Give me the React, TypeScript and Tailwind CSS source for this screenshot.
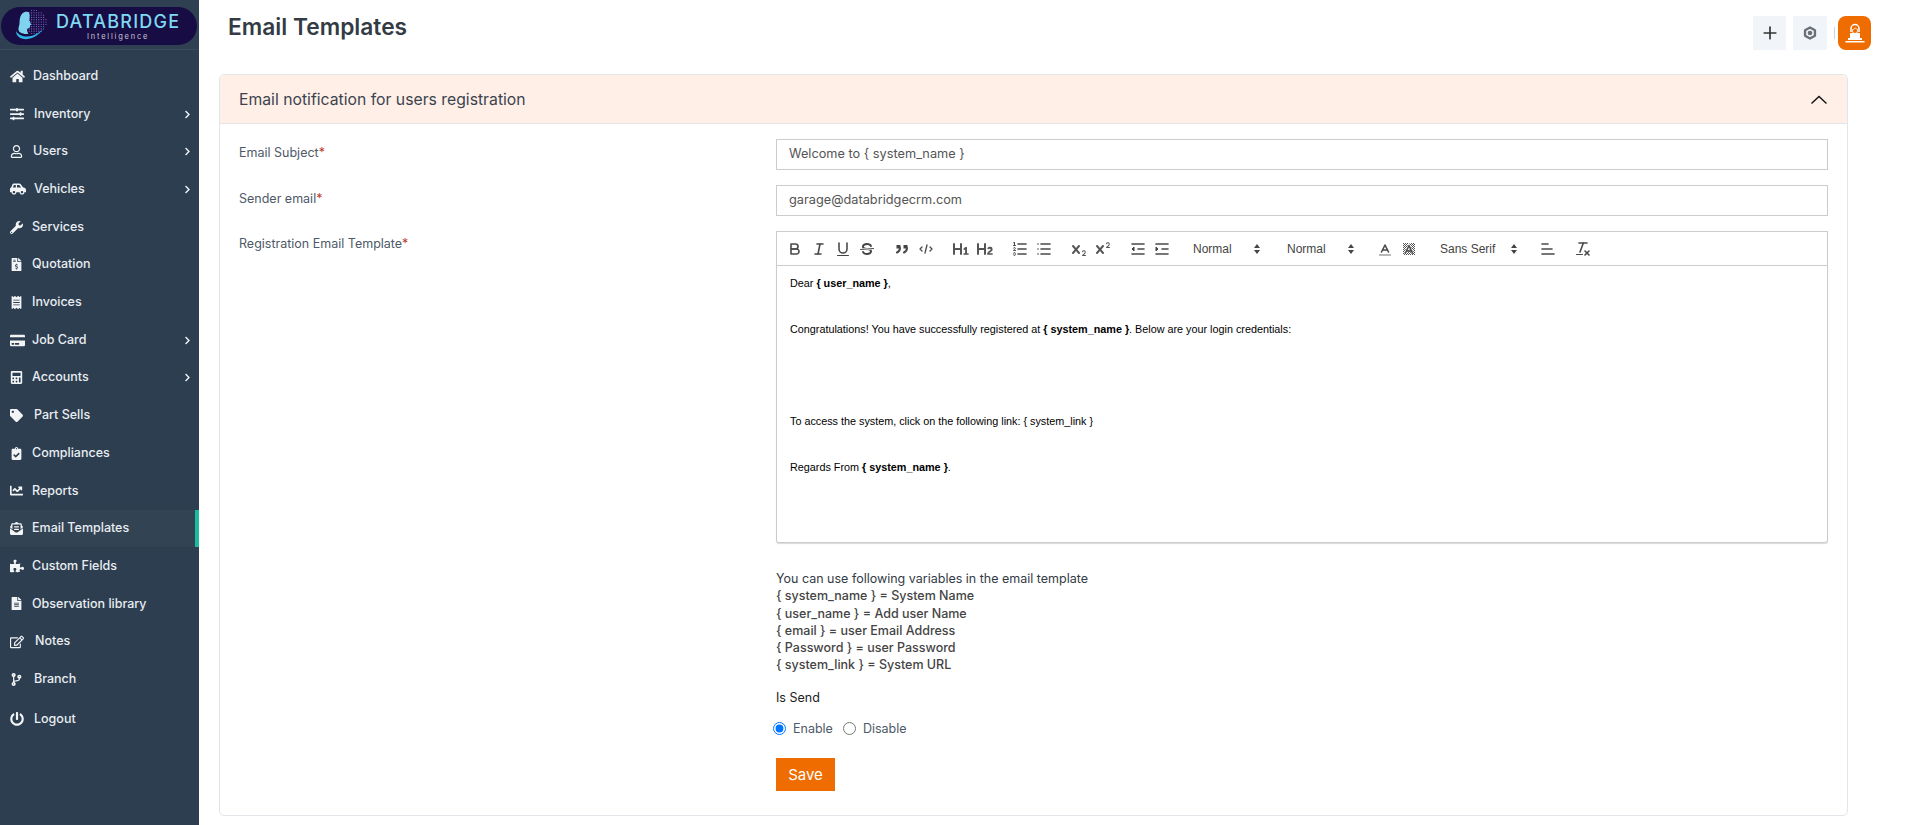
import React from 'react';
import {
  FaHome, FaSlidersH, FaRegUser, FaCarSide, FaWrench, FaFileInvoiceDollar, FaReceipt, FaCreditCard,
  FaCalculator, FaTag, FaClipboardCheck, FaChartLine, FaEnvelopeOpenText, FaPuzzlePiece, FaFileAlt,
  FaRegEdit, FaCodeBranch, FaPowerOff, FaChevronRight,
} from 'react-icons/fa';
import { Plus } from 'lucide-react';

const UI = "font-['Inter','Noto_Sans',sans-serif]";

const navItems = [
  { label: 'Dashboard', icon: FaHome, size: 15, pad: 'pl-[1px]' },
  { label: 'Inventory', icon: FaSlidersH, size: 14, pad: 'pl-[2px]', arrow: true },
  { label: 'Users', icon: FaRegUser, size: 13, pad: 'pl-[1px]', arrow: true },
  { label: 'Vehicles', icon: FaCarSide, size: 16, pad: 'pl-[2px]', arrow: true },
  { label: 'Services', icon: FaWrench, size: 13, pad: 'pl-0' },
  { label: 'Quotation', icon: FaFileInvoiceDollar, size: 13, pad: 'pl-0' },
  { label: 'Invoices', icon: FaReceipt, size: 13, pad: 'pl-0' },
  { label: 'Job Card', icon: FaCreditCard, size: 15, pad: 'pl-0', arrow: true },
  { label: 'Accounts', icon: FaCalculator, size: 13, pad: 'pl-0', arrow: true },
  { label: 'Part Sells', icon: FaTag, size: 13, pad: 'pl-[2px]' },
  { label: 'Compliances', icon: FaClipboardCheck, size: 13, pad: 'pl-0' },
  { label: 'Reports', icon: FaChartLine, size: 13, pad: 'pl-0' },
  { label: 'Email Templates', icon: FaEnvelopeOpenText, size: 13, pad: 'pl-0', active: true },
  { label: 'Custom Fields', icon: FaPuzzlePiece, size: 14, pad: 'pl-0' },
  { label: 'Observation library', icon: FaFileAlt, size: 13, pad: 'pl-0' },
  { label: 'Notes', icon: FaRegEdit, size: 14, pad: 'pl-[3px]' },
  { label: 'Branch', icon: FaCodeBranch, size: 13, pad: 'pl-[2px]' },
  { label: 'Logout', icon: FaPowerOff, size: 14, pad: 'pl-[2px]', logout: true },
];

function Logo() {
  const dots = [];
  for (let r = 0; r < 11; r++) {
    for (let c = 0; c < 11; c++) {
      const dx = c - 5;
      const dy = r - 5;
      if (dx * dx + dy * dy > 27) continue;
      dots.push(
        <circle key={`${r}-${c}`} cx={33 + dx * 2.4} cy={15 + dy * 2.3} r="0.6" fill={(r * 2 + c) % 3 === 0 ? '#c9509f' : '#5a78d8'} />
      );
    }
  }
  return (
    <div className="flex h-[38px] w-[196px] items-center rounded-[19px] bg-[#170c43] overflow-hidden">
      <svg width="54" height="38" viewBox="0 0 54 38" className="shrink-0">
        {dots}
        <path d="M27 5c-4-1-7 2-8 6-.8 3 0 5-1 8-.7 2.500-1 5 1.500 6.500 3 1.500 6 2 8 1-1.500-1.500-2-3.500-1-5 1-.5 2.500-.5 2.500-2 0-1 .5-1.500 1-2 .5-.5-.5-1.200-.8-1.500.5-.8 0-1.500-1-2.500 .8-3.500 .5-7.500-.7-8.500z" fill="#7fd3ef" />
        <path d="M15 24c0 7 8 10 16 7 5-2 9-6 11-9-4 4-10 7.500-16 7.500-4.500 0-8.500-1.500-11-5.500z" fill="#2fb3e8" />
      </svg>
      <div className="flex flex-col items-center ml-[1px]">
        <span className={`${UI} text-[18px] leading-[20px] font-medium tracking-[1.2px] text-[#7fd9f2]`}>DATABRIDGE</span>
        <span className={`${UI} text-[7.5px] leading-[9px] tracking-[1.8px] text-[#c9c9d6]`}>Intelligence</span>
      </div>
    </div>
  );
}

function Sidebar() {
  return (
    <aside className="w-[199px] shrink-0 bg-[#2c3e50] flex flex-col">
      <div className="h-[50px] pl-[1px] pt-[7px] border-b border-[#394b5d] bg-[#2e4052]">
        <Logo />
      </div>
      <nav className="pt-[7.500px]">
        {navItems.map((item) => {
          const Icon = item.icon;
          return (
            <div
              key={item.label}
              className={`h-[37.7px] flex items-center pl-[10px] pr-[7px] ${item.active ? 'bg-[#324354] border-r-4 border-[#1abc9c]' : ''} ${item.logout ? 'mt-[2px]' : ''}`}
            >
              <span className="w-[22px] shrink-0 flex">
                <Icon size={item.size} color="#f2f4f6" />
              </span>
              <span className={`${item.pad} flex-1 text-[12.5px] font-medium text-[#e9edf1]`}>{item.label}</span>
              {item.arrow && <FaChevronRight size={9} color="#f2f4f6" />}
            </div>
          );
        })}
      </nav>
    </aside>
  );
}

const stroke = { fill: 'none', stroke: '#4a4a4a', strokeWidth: 1.6, strokeLinecap: 'round', strokeLinejoin: 'round' } as const;
const thin = { ...stroke, strokeWidth: 1 };

function Tool({ children }: { children: React.ReactNode }) {
  return (
    <span className="w-[24px] h-[24px] flex items-center justify-center shrink-0">
      <svg width="18" height="18" viewBox="0 0 18 18">{children}</svg>
    </span>
  );
}

function Picker({ label, width }: { label: string; width: string }) {
  return (
    <span className={`${width} h-[24px] flex items-center justify-between pl-[8px] pr-[7px] shrink-0 text-[12px] text-[#444] font-['Liberation_Sans',Arial,sans-serif]`}>
      {label}
      <svg width="8" height="12" viewBox="0 0 8 12">
        <path d="M4 1 7 5H1z M4 11 1 7h6z" fill="#444" />
      </svg>
    </span>
  );
}

function Toolbar() {
  return (
    <div className="h-[35px] border border-[#ccc] flex items-center pl-[6px]">
      <div className="flex mr-[11px]">
        <Tool>
          <path {...stroke} d="M5,4H9.5A2.5,2.5,0,0,1,12,6.5v0A2.5,2.5,0,0,1,9.5,9H5V4Z" />
          <path {...stroke} d="M5,9h5.5A2.5,2.5,0,0,1,13,11.5v0A2.5,2.5,0,0,1,10.5,14H5V9Z" />
        </Tool>
        <Tool>
          <line {...stroke} x1="7" x2="13" y1="4" y2="4" />
          <line {...stroke} x1="5" x2="11" y1="14" y2="14" />
          <line {...stroke} x1="8" x2="10" y1="14" y2="4" />
        </Tool>
        <Tool>
          <path {...stroke} d="M5,3V9a4.006,4.006,0,0,0,4,4H9a4.006,4.006,0,0,0,4-4V3" />
          <rect fill="#444" height="1" rx="0.5" ry="0.5" width="12" x="3" y="15" />
        </Tool>
        <Tool>
          <line {...thin} x1="15.5" x2="2.5" y1="8.5" y2="9.5" />
          <path fill="#444" d="M9.007,8C6.542,7.791,6,7.519,6,6.5,6,5.792,7.283,5,9,5c1.571,0,2.765.679,2.969,1.309a1,1,0,0,0,1.9-.617C13.356,4.106,11.354,3,9,3,6.2,3,4,4.538,4,6.5a3.2,3.2,0,0,0,.5,1.843Z" />
          <path fill="#444" d="M8.984,10C11.457,10.208,12,10.479,12,11.5c0,.708-1.283,1.5-3,1.5-1.571,0-2.765-.679-2.969-1.309a1,1,0,1,0-1.9.617C4.644,13.894,6.646,15,9,15c2.8,0,5-1.538,5-3.5a3.2,3.2,0,0,0-.5-1.843Z" />
        </Tool>
      </div>
      <div className="flex mr-[11px]">
        <Tool>
          <rect fill="#444" height="3.500" width="4" x="3.500" y="5" />
          <rect fill="#444" height="3.500" width="4" x="10.500" y="5" />
          <path {...stroke} strokeWidth={2} d="M7,8c0,3-3,4.500-3,4.500" />
          <path {...stroke} strokeWidth={2} d="M14,8c0,3-3,4.500-3,4.500" />
        </Tool>
        <Tool>
          <polyline {...stroke} strokeWidth={1.3} points="5 7 3 9 5 11" />
          <polyline {...stroke} strokeWidth={1.3} points="13 7 15 9 13 11" />
          <line {...stroke} strokeWidth={1.3} x1="10" x2="8" y1="5" y2="13" />
        </Tool>
      </div>
      <div className="flex mr-[11px]">
        <Tool>
          <path fill="#555" d="M10,4V14a1,1,0,0,1-2,0V10H3v4a1,1,0,0,1-2,0V4A1,1,0,0,1,3,4V8H8V4a1,1,0,0,1,2,0Zm6.06787,9.209H14.98975V7.59863a.54085.54085,0,0,0-.605-.60547h-.62744a1.01119,1.01119,0,0,0-.748.29688L11.645,8.56641a.5435.5435,0,0,0-.022.8584l.28613.30762a.53861.53861,0,0,0,.84717.0332l.09912-.08789a1.2137,1.2137,0,0,0,.2417-.35254h.02246s-.01123.30859-.01123.60547V13.209H12.041a.54085.54085,0,0,0-.605.60547v.43945a.54085.54085,0,0,0,.605.60547h4.02686a.54085.54085,0,0,0,.605-.60547v-.43945A.54085.54085,0,0,0,16.06787,13.209Z" />
        </Tool>
        <Tool>
          <path fill="#555" d="M16.73975,13.81445v.43945a.54085.54085,0,0,1-.605.60547H11.855a.58392.58392,0,0,1-.64893-.60547V14.0127c0-2.90527,3.39941-3.42187,3.39941-4.55469a.77675.77675,0,0,0-.84717-.78125,1.17684,1.17684,0,0,0-.83594.38477c-.2749.26367-.561.374-.85791.13184l-.4292-.34082c-.30811-.24219-.38525-.51758-.1543-.81445a2.97155,2.97155,0,0,1,2.45361-1.17676,2.45393,2.45393,0,0,1,2.68408,2.40918c0,2.45312-3.1792,2.92676-3.27832,3.93848h2.79443A.54085.54085,0,0,1,16.73975,13.81445ZM9,3A.99974.99974,0,0,0,8,4V8H3V4A1,1,0,0,0,1,4V14a1,1,0,0,0,2,0V10H8v4a1,1,0,0,0,2,0V4A.99974.99974,0,0,0,9,3Z" />
        </Tool>
      </div>
      <div className="flex mr-[11px]">
        <Tool>
          <line {...stroke} x1="7" x2="15" y1="4" y2="4" />
          <line {...stroke} x1="7" x2="15" y1="9" y2="9" />
          <line {...stroke} x1="7" x2="15" y1="14" y2="14" />
          <line {...thin} x1="2.5" x2="4.5" y1="5.5" y2="5.5" />
          <path fill="#444" d="M3.5,6A0.5,0.5,0,0,1,3,5.5V3.085l-0.276.138A0.5,0.5,0,0,1,2.053,3c-0.124-.247-0.023-0.324.224-0.447l1-.5A0.5,0.5,0,0,1,4,2.5v3A0.5,0.5,0,0,1,3.5,6Z" />
          <path {...thin} d="M4.5,10.5h-2c0-.234,1.85-1.076,1.85-2.234A0.959,0.959,0,0,0,2.5,8.156" />
          <path {...thin} d="M2.5,14.846a0.959,0.959,0,0,0,1.85-.109A0.7,0.7,0,0,0,3.75,14a0.688,0.688,0,0,0,.6-0.736,0.959,0.959,0,0,0-1.85-.109" />
        </Tool>
        <Tool>
          <line {...stroke} x1="6" x2="15" y1="4" y2="4" />
          <line {...stroke} x1="6" x2="15" y1="9" y2="9" />
          <line {...stroke} x1="6" x2="15" y1="14" y2="14" />
          <line {...stroke} x1="3" x2="3" y1="4" y2="4" />
          <line {...stroke} x1="3" x2="3" y1="9" y2="9" />
          <line {...stroke} x1="3" x2="3" y1="14" y2="14" />
        </Tool>
      </div>
      <div className="flex mr-[11px]">
        <Tool>
          <path fill="#555" d="M15.5,15H13.861a3.858,3.858,0,0,0,1.914-2.975,1.8,1.8,0,0,0-1.6-1.751A1.921,1.921,0,0,0,12.021,11.7a0.50013,0.50013,0,1,0,.957.291h0a0.914,0.914,0,0,1,1.053-.725,0.81,0.81,0,0,1,.744.762c0,1.076-1.16971,1.86982-1.93971,2.43082A1.45639,1.45639,0,0,0,12,15.5a0.5,0.5,0,0,0,.5.5h3A0.5,0.5,0,0,0,15.5,15Z" />
          <path fill="#555" d="M9.65,5.241a1,1,0,0,0-1.409.108L6,7.964,3.759,5.349A1,1,0,0,0,2.192,6.59178Q2.21541,6.6213,2.241,6.649L4.684,9.5,2.241,12.35A1,1,0,0,0,3.71,13.70722q0.02557-.02768.049-0.05722L6,11.036,8.241,13.65a1,1,0,1,0,1.567-1.24277Q9.78459,12.3777,9.759,12.35L7.316,9.5,9.759,6.651A1,1,0,0,0,9.65,5.241Z" />
        </Tool>
        <Tool>
          <path fill="#555" d="M15.5,7H13.861a4.015,4.015,0,0,0,1.914-2.975,1.8,1.8,0,0,0-1.6-1.751A1.922,1.922,0,0,0,12.021,3.7a0.5,0.5,0,1,0,.957.291,0.917,0.917,0,0,1,1.053-.725,0.81,0.81,0,0,1,.744.762c0,1.077-1.164,1.925-1.934,2.486A1.423,1.423,0,0,0,12,7.5a0.5,0.5,0,0,0,.5.5h3A0.5,0.5,0,0,0,15.5,7Z" />
          <path fill="#555" d="M9.651,5.241a1,1,0,0,0-1.41.108L6,7.964,3.759,5.349a1,1,0,1,0-1.519,1.3L4.683,9.5,2.241,12.35a1,1,0,1,0,1.519,1.3L6,11.036,8.241,13.65a1,1,0,0,0,1.519-1.3L7.317,9.5,9.759,6.651A1,1,0,0,0,9.651,5.241Z" />
        </Tool>
      </div>
      <div className="flex mr-[11px]">
        <Tool>
          <line {...stroke} x1="3" x2="15" y1="14" y2="14" />
          <line {...stroke} x1="3" x2="15" y1="4" y2="4" />
          <line {...stroke} x1="9" x2="15" y1="9" y2="9" />
          <polyline fill="#444" stroke="#444" strokeWidth={1} points="5 7 5 11 3 9 5 7" />
        </Tool>
        <Tool>
          <line {...stroke} x1="3" x2="15" y1="14" y2="14" />
          <line {...stroke} x1="3" x2="15" y1="4" y2="4" />
          <line {...stroke} x1="9" x2="15" y1="9" y2="9" />
          <polyline fill="#444" stroke="#444" strokeWidth={1} points="3 7 3 11 5 9 3 7" />
        </Tool>
      </div>
      <div className="mr-[11px]"><Picker label="Normal" width="w-[83px]" /></div>
      <div className="mr-[11px]"><Picker label="Normal" width="w-[83px]" /></div>
      <div className="flex mr-[11px]">
        <Tool>
          <line x1="3" x2="15" y1="15" y2="15" stroke="#444" strokeWidth={1.5} opacity="0.5" />
          <polyline {...stroke} points="5.5 12 9 5 12.5 12" />
          <line {...stroke} x1="11.3" x2="6.7" y1="10" y2="10" />
        </Tool>
        <Tool>
          <defs>
            <pattern id="bgp" width="2" height="2" patternUnits="userSpaceOnUse">
              <rect width="1" height="1" fill="#555" />
              <rect x="1" y="1" width="1" height="1" fill="#555" />
            </pattern>
          </defs>
          <rect x="3" y="3" width="12" height="12" fill="url(#bgp)" />
          <polyline fill="none" stroke="#fff" strokeWidth={2.6} points="5.5 13 9 5.500 12.5 13" />
          <polyline {...stroke} points="5.5 13 9 5.500 12.5 13" />
          <line {...stroke} x1="11.3" x2="6.7" y1="11" y2="11" />
        </Tool>
      </div>
      <div className="mr-[11px]"><Picker label="Sans Serif" width="w-[93px]" /></div>
      <div className="mr-[11px]">
        <Tool>
          <line {...stroke} x1="3" x2="15" y1="14" y2="14" />
          <line {...stroke} x1="3" x2="13" y1="9" y2="9" />
          <line {...stroke} x1="3" x2="9" y1="4" y2="4" />
        </Tool>
      </div>
      <Tool>
        <line {...stroke} x1="5" x2="13" y1="3" y2="3" />
        <line {...stroke} x1="6" x2="9.35" y1="12" y2="3" />
        <line {...stroke} x1="11" x2="15" y1="11" y2="15" />
        <line {...stroke} x1="15" x2="11" y1="11" y2="15" />
        <rect fill="#444" height="1" rx="0.5" ry="0.5" width="7" x="2" y="14" />
      </Tool>
    </div>
  );
}

function Editor() {
  return (
    <div>
      <Toolbar />
      <div className="h-[277px] border border-t-0 border-[#ccc] rounded-b-[3px] px-[13px] pt-[9px] font-['Liberation_Sans',Arial,sans-serif] text-[10.8px] leading-[16px] text-black shadow-[0_1px_1px_rgba(0,0,0,0.15)]">
        <p>Dear <strong>{'{ user_name }'}</strong>,</p>
        <p className="mt-[30px]">Congratulations! You have successfully registered at <strong>{'{ system_name }'}</strong>. Below are your login credentials:</p>
        <p className="mt-[76px]">To access the system, click on the following link: {'{ system_link }'}</p>
        <p className="mt-[30px]">Regards From <strong>{'{ system_name }'}</strong>.</p>
      </div>
    </div>
  );
}

function Field({ label, value }: { label: string; value: string }) {
  return (
    <>
      <label className="text-[12.5px] text-[#4e5968] pt-[5px]">
        {label}<span className="text-[#c0392b]">*</span>
      </label>
      <input
        readOnly
        value={value}
        className={`${UI} h-[31px] w-full border border-[#ccc] px-[12px] pb-[2px] text-[12.75px] text-[#555] outline-none`}
      />
    </>
  );
}

export default function App() {
  return (
    <div className={`${UI} h-[825px] w-[1918px] flex overflow-hidden bg-white`}>
      <Sidebar />
      <main className="flex-1 pl-[20px] pr-[70px] min-w-0">
        <header className="h-[74px] flex items-start justify-between">
          <h1 className="pl-[9px] pt-[11px] text-[22.75px] leading-[32px] font-semibold text-[#333b45]">Email Templates</h1>
          <div className="flex items-center pt-[16px] -mr-[23px]">
            <span className="w-[33px] h-[34px] bg-[#f1f4f9] flex items-center justify-center text-[#333]">
              <Plus size={20} strokeWidth={2} />
            </span>
            <span className="w-[34px] h-[34px] ml-[7px] bg-[#f1f4f9] flex items-center justify-center">
              <svg width="14" height="14" viewBox="0 0 24 24" fill="none" stroke="#6b7076" strokeWidth="4">
                <path d="M12 2.500 20.500 7.300v9.400L12 21.500 3.500 16.700V7.300z" strokeLinejoin="round" />
                <circle cx="12" cy="12" r="2" />
              </svg>
            </span>
            <span className="w-px h-[12px] bg-[#cfd3d8] ml-[7px]"></span>
            <span className="w-[33px] h-[34px] ml-[3px] bg-[#ee6c00] rounded-[8px] flex items-center justify-center">
              <svg width="24" height="24" viewBox="0 0 24 24">
                <path d="M8 11V7.500a4 4 0 0 1 8 0V11" fill="none" stroke="#fff" strokeWidth="1.500" />
                <path d="M9.500 8.500c1.200 0 2.300-.7 2.800-1.700.4.8 1.200 1.500 2.200 1.700V10a2.500 2.500 0 0 1-5 0z" fill="none" stroke="#fff" strokeWidth="0.800" />
                <rect x="7" y="12" width="10" height="5" fill="#fff" />
                <rect x="5" y="17" width="14" height="2" fill="#fff" />
                <rect x="2.500" y="20" width="19" height="1.500" fill="#fff" />
              </svg>
            </span>
          </div>
        </header>

        <section className="h-[742px] border border-[#e2e5e9] rounded-[5px]">
          <div className="h-[49px] bg-[#ffefe7] border-b border-[#e2e5e9] rounded-t-[5px] flex items-center justify-between pl-[19px] pr-[19px] pt-[1px]">
            <h2 className="text-[15.75px] text-[#3b4350]">Email notification for users registration</h2>
            <svg width="18" height="10" viewBox="0 0 18 10" fill="none" stroke="#111" strokeWidth="1.4">
              <path d="M1.500 8.500 9 1.500l7.500 7" />
            </svg>
          </div>

          <div className="px-[19px] pt-[15px] pb-[20px] grid grid-cols-[537px_1fr] gap-y-[15px] items-start">
            <Field label="Email Subject" value="Welcome to { system_name }" />
            <Field label="Sender email" value="garage@databridgecrm.com" />
            <label className="text-[12.5px] text-[#4e5968] pt-[4px]">
              Registration Email Template<span className="text-[#c0392b]">*</span>
            </label>
            <Editor />
            <div></div>
            <div className="text-[12.5px] leading-[17.300px] text-[#333b45] -mt-[3px]">
              <p className="pt-[15px]">You can use following variables in the email template</p>
              <p className="font-medium text-[#444]">{'{ system_name }'} = System Name</p>
              <p className="font-medium text-[#444]">{'{ user_name }'} = Add user Name</p>
              <p className="font-medium text-[#444]">{'{ email }'} = user Email Address</p>
              <p className="font-medium text-[#444]">{'{ Password }'} = user Password</p>
              <p className="font-medium text-[#444]">{'{ system_link }'} = System URL</p>
              <p className="mt-[15px] text-[#222]">Is Send</p>
              <div className="mt-[14px] flex items-center -ml-[3px] text-[#4e5968]">
                <input type="radio" name="send" defaultChecked className="w-[13px] h-[13px] m-0 accent-[#0075ff]" />
                <span className="ml-[7px]">Enable</span>
                <input type="radio" name="send" className="w-[13px] h-[13px] ml-[10px]" />
                <span className="ml-[7px]">Disable</span>
              </div>
              <button className="mt-[21px] w-[59px] h-[33px] bg-[#ee6c00] text-white text-[15px]">Save</button>
            </div>
          </div>
        </section>
      </main>
    </div>
  );
}
